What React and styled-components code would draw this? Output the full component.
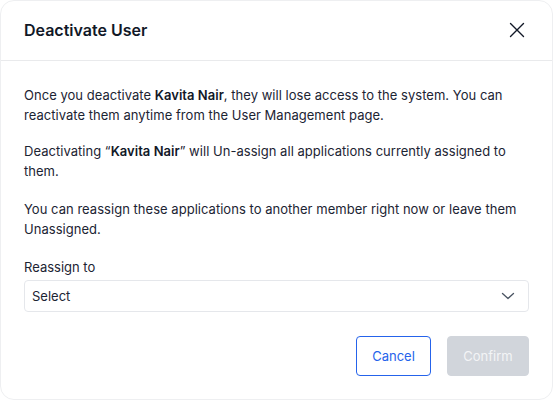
import React from "react";
import styled, { createGlobalStyle } from "styled-components";

const Global = createGlobalStyle`
  html, body { margin: 0; padding: 0; background: #ffffff; }
  body { font-family: Inter, "Noto Sans", sans-serif; -webkit-font-smoothing: antialiased; }
  * { box-sizing: border-box; }
`;

const Dialog = styled.div`
  width: 553px;
  height: 400px;
  background: #fff;
  border: 1px solid #eeeff1;
  border-radius: 14px;
  display: flex;
  flex-direction: column;
  overflow: hidden;
`;

const Header = styled.div`
  height: 60px;
  padding: 0 23px 1px 23px;
  display: flex;
  align-items: center;
  justify-content: space-between;
  border-bottom: 1px solid #e9eaec;
  flex-shrink: 0;
`;

const Title = styled.h2`
  margin: 0;
  font-size: 16px;
  font-weight: 600;
  color: #111827;
  line-height: 20px;
`;

const CloseButton = styled.button`
  border: none;
  background: none;
  padding: 0;
  width: 24px;
  height: 24px;
  display: flex;
  align-items: center;
  justify-content: center;
  color: #111827;
  cursor: pointer;
`;

const Body = styled.div`
  padding: 24px 23px 24px 23px;
  display: flex;
  flex-direction: column;
  flex: 1;
`;

const Paragraph = styled.p`
  margin: 0 0 ${(p) => p.$gap || 16}px 0;
  font-size: 13px;
  line-height: 20px;
  color: #1c2433;
  letter-spacing: 0.03px;
  strong { font-weight: 600; color: #111827; }
`;

const Label = styled.label`
  font-size: 13px;
  line-height: 20px;
  color: #1c2433;
  margin-bottom: 3px;
`;

const SelectBox = styled.div`
  height: 32px;
  border: 1px solid #e5e7eb;
  border-radius: 4px;
  padding: 0 12px 0 7px;
  display: flex;
  align-items: center;
  justify-content: space-between;
  font-size: 13px;
  color: #1c2433;
`;

const Footer = styled.div`
  margin-top: 24px;
  display: flex;
  justify-content: flex-end;
  gap: 16px;
`;

const Button = styled.button`
  height: 40px;
  padding: 0 15px;
  border-radius: 4px;
  font-family: inherit;
  font-size: 13px;
  font-weight: 400;
  cursor: pointer;
  border: 1px solid ${(p) => (p.$primary ? "#d1d5db" : "#2563eb")};
  background: ${(p) => (p.$primary ? "#d1d5db" : "#ffffff")};
  color: ${(p) => (p.$primary ? "#f3f4f6" : "#2563eb")};
  width: ${(p) => (p.$primary ? 82 : 75)}px;
`;

export default function App() {
  return (
    <>
      <Global />
      <Dialog>
        <Header>
          <Title>Deactivate User</Title>
          <CloseButton aria-label="Close">
            <svg width="16" height="16" viewBox="0 0 16 16" fill="none">
              <path d="M1.5 1.5L14.5 14.5M14.5 1.5L1.5 14.5" stroke="#111827" strokeWidth="1.4" strokeLinecap="round" />
            </svg>
          </CloseButton>
        </Header>
        <Body>
          <Paragraph>
            Once you deactivate <strong>Kavita Nair</strong>, they will lose access to the system. You can reactivate them anytime from the User Management page.
          </Paragraph>
          <Paragraph $gap={18}>
            Deactivating “<strong>Kavita Nair</strong>” will Un-assign all applications currently assigned to them.
          </Paragraph>
          <Paragraph $gap={18}>
            You can reassign these applications to another member right now or leave them Unassigned.
          </Paragraph>
          <Label>Reassign to</Label>
          <SelectBox>
            <span>Select</span>
            <svg width="16" height="16" viewBox="0 0 16 16" fill="none">
              <path d="M2.5 5.5L8 10.5L13.5 5.5" stroke="#4b5563" strokeWidth="1.3" strokeLinecap="round" strokeLinejoin="round" />
            </svg>
          </SelectBox>
          <Footer>
            <Button>Cancel</Button>
            <Button $primary disabled>Confirm</Button>
          </Footer>
        </Body>
      </Dialog>
    </>
  );
}
